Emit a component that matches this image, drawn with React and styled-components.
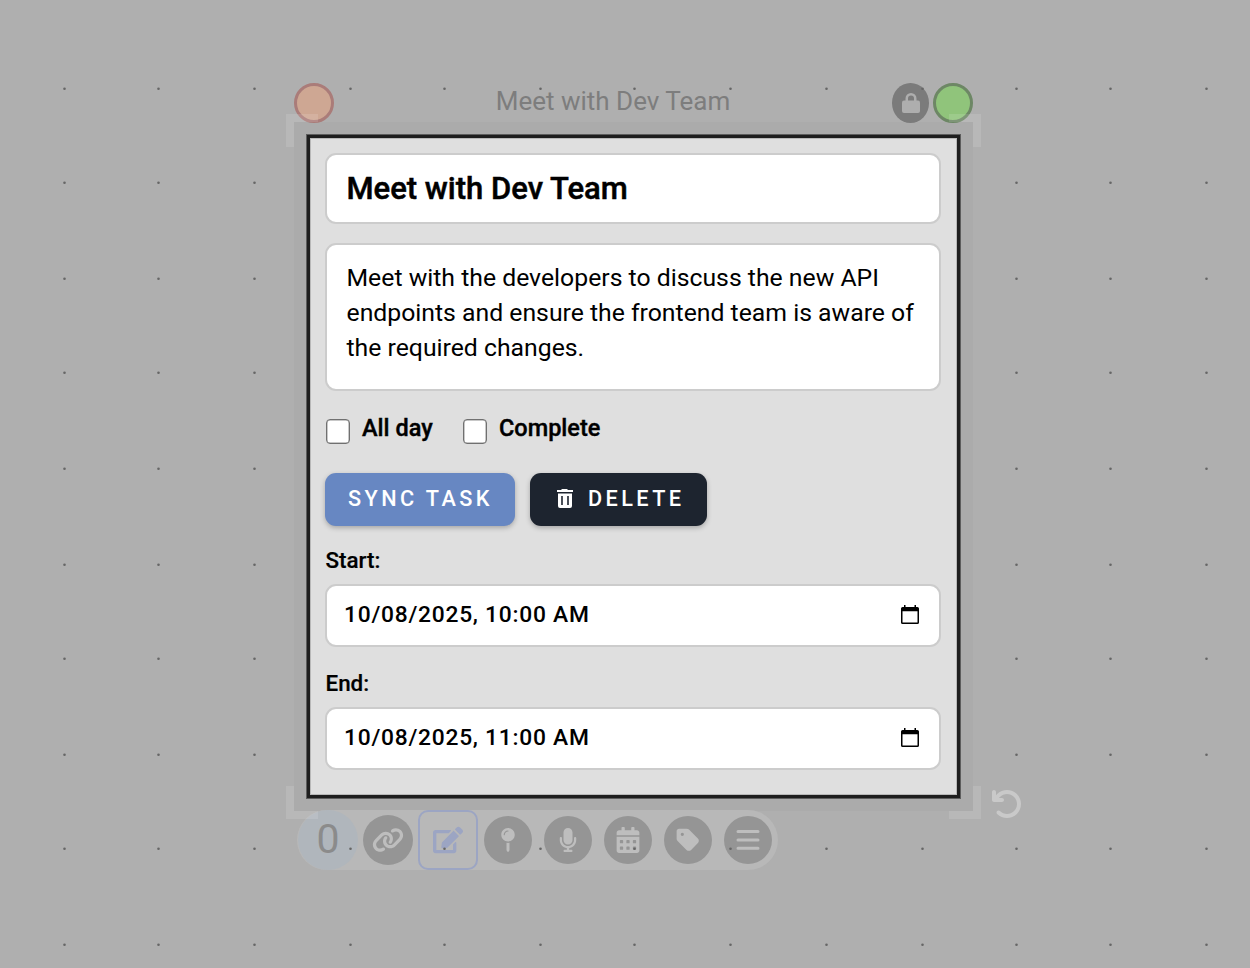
import React from "react";
import styled, { createGlobalStyle } from "styled-components";
import { FaLink, FaArrowRotateLeft, FaMicrophone, FaTag } from "react-icons/fa6";
import { FaEdit, FaMapPin, FaCalendarAlt } from "react-icons/fa";

const GlobalStyle = createGlobalStyle`
  *, *::before, *::after { box-sizing: border-box; }
  body { margin: 0; font-family: Roboto, "Liberation Sans", sans-serif; color: #000; }
`;

const Canvas = styled.main`
  position: relative;
  width: 1250px;
  height: 968px;
  padding: 82px 0 0 286px;
  overflow: hidden;
  background: #afafaf;
`;

const DotGrid = styled.svg`
  position: absolute;
  inset: 0;
  z-index: 2;
  pointer-events: none;
`;

const TaskNode = styled.section`
  position: relative;
  width: 695px;
  padding: 0 8px;
`;

const Halo = styled.div`
  padding: 13px;
  width: 679px;
  background: #ababab;
`;

const Header = styled.header`
  display: flex;
  align-items: center;
  height: 40px;
`;

const Dot = styled.span`
  width: 40px;
  height: 40px;
  margin-top: 1px;
  border-radius: 50%;
  border: 3px solid ${(p) => p.$ring};
  background: ${(p) => p.$fill};
`;

const HeaderTitle = styled.h2`
  flex: 1;
  margin: 0;
  padding: 0 0 3px 0;
  text-align: center;
  font-size: 26px;
  font-weight: 400;
  color: #7d7d7d;
`;

const LockBadge = styled.span`
  display: flex;
  align-items: center;
  justify-content: center;
  width: 37px;
  height: 40px;
  margin: 1px 4px 0 0;
  border-radius: 50%;
  background: #7b7b7b;
`;

const Corner = styled.span`
  position: absolute;
  z-index: 1;
  width: 32px;
  height: 33px;
  border: 0 solid rgba(255, 255, 255, 0.12);
  ${(p) => p.$v}: ${(p) => (p.$v === "top" ? "32px" : "51px")};
  ${(p) => p.$h}: 0;
  border-${(p) => p.$v}-width: 8px;
  border-${(p) => p.$h}-width: 8px;
`;

const Rotate = styled.span`
  position: absolute;
  left: 705px;
  top: 706px;
  display: flex;
  color: #c9c9c9;
`;

const Card = styled.div`
  position: relative;
  z-index: 3;
  display: flex;
  flex-direction: column;
  width: 653px;
  height: 663px;
  padding: 15px 16px;
  border: 3px solid #1e1e1e;
  box-shadow: 0 0 0 1px rgba(30, 30, 30, 0.55), inset 0 0 0 1px rgba(30, 30, 30, 0.2);
  background: #dfdfdf;
`;

const Field = styled.div`
  width: 616px;
  margin-left: -1px;
  border: 2px solid #cccccc;
  border-radius: 11px;
  background: #fff;
`;

const TitleField = styled(Field)`
  height: 71px;
  padding: 0 19.500px;
  font-size: 31px;
  line-height: 68px;
  font-weight: 500;
  -webkit-text-stroke: 0.5px #000;
  white-space: nowrap;
`;

const TextField = styled(Field)`
  height: 148px;
  margin-top: 19px;
  padding: 15px 19.5px;
  font-size: 24.770px;
  line-height: 35px;
  white-space: nowrap;
`;

const Checks = styled.div`
  display: flex;
  height: 25px;
  margin-top: 28px;
`;

const Check = styled.label`
  display: flex;
  width: 137px;
  gap: 12px;
  font-size: 23.5px;
  line-height: 18px;
  font-weight: 500;
  -webkit-text-stroke: 0.4px #000;
  white-space: nowrap;
`;

const Box = styled.span`
  flex: none;
  width: 24px;
  height: 25px;
  border: 1.5px solid #707070;
  box-shadow: inset 0 0 0 0.5px #909090;
  border-radius: 4px;
  background: #fff;
`;

const Buttons = styled.div`
  display: flex;
  gap: 15px;
  margin: 29px 0 0 -1px;
`;

const Button = styled.button`
  display: flex;
  align-items: center;
  justify-content: flex-start;
  gap: 15px;
  width: ${(p) => p.$w}px;
  height: 53px;
  padding: 0 0 2px ${(p) => p.$pad}px;
  border: 0;
  border-radius: 11px;
  background: ${(p) => p.$bg};
  box-shadow: 0 2px 5px rgba(0, 0, 0, 0.25);
  color: #fff;
  font: 500 21.700px/26px Roboto, "Liberation Sans", sans-serif;
  letter-spacing: 3.4px;
  white-space: nowrap;
`;

const Label = styled.span`
  margin: ${(p) => p.$top}px 0 0 -0.500px;
  font-size: 22.400px;
  line-height: 28px;
  font-weight: 500;
  -webkit-text-stroke: 0.2px #000;
`;

const DateField = styled(Field)`
  display: flex;
  align-items: center;
  justify-content: space-between;
  height: 63px;
  margin-top: 10px;
  padding: 0 20px 3px 17px;
  font-size: 22.800px;
  font-weight: 500;
  letter-spacing: 0.740px;
  white-space: nowrap;

  svg { margin-top: 2px; }
`;

const Toolbar = styled.nav`
  display: flex;
  align-items: center;
  width: 481px;
  height: 60px;
  margin: -1px 0 0 3px;
  padding-left: 1px;
  border-radius: 30px;
  background: #b8b8b8;
`;

const Count = styled.span`
  width: 60px;
  height: 60px;
  border-radius: 50%;
  background: #b0b6bc;
  color: #8b8b8b;
  font-size: 41px;
  line-height: 58px;
  text-align: center;
`;

const Slot = styled.span`
  display: flex;
  align-items: center;
  justify-content: center;
  width: 60px;
  height: 60px;
  border: ${(p) => (p.$active ? "2px solid #9ca5c3" : "0")};
  border-radius: 10px;
  color: #9ca5c3;
`;

const Round = styled.span`
  display: flex;
  align-items: center;
  justify-content: center;
  width: ${(p) => p.$d || 48}px;
  height: ${(p) => p.$d || 48}px;
  border-radius: 50%;
  background: #959595;
  color: #bebebe;
`;

const dotX = [64.5, 158.5, 254.5, 350.5, 444.5, 540.5, 634.5, 730.5, 826.5, 922.5, 1016.5, 1110.5, 1206.5];
const dotY = [88.7, 182.7, 278.7, 372.7, 468.7, 564.7, 658.7, 754.7, 848.7, 944.7];

const LockIcon = () => (
  <svg width="18" height="20" viewBox="0 0 18 20">
    <path d="M3.500 9V5.500a5.500 5.500 0 0 1 11 0V9z" fill="#aeaeae" />
    <rect y="7.500" width="18" height="12.500" rx="2" fill="#aeaeae" />
    <path d="M6 7.500V5.600a3 3 0 0 1 6 0v1.900z" fill="#7b7b7b" />
  </svg>
);

const BinIcon = () => (
  <svg width="16" height="19" viewBox="0 0 16 19" fill="#fff">
    <path d="M5 0h5l1 1h5v2H0V1h4z" />
    <path fillRule="evenodd" d="M1 4.500h14V17q0 2-2 2H3q-2 0-2-2zM4.200 7v9h1.600V7zM10.200 7v9h1.600V7z" />
  </svg>
);

const PickerIcon = () => (
  <svg width="18" height="20" viewBox="0 0 18 20">
    <path d="M3 0h1.500v2h9V0H15v2h1.400Q18 2 18 3.600v13.800Q18 19 16.400 19H1.600Q0 19 0 17.400V3.600Q0 2 1.600 2H3zM1.500 6.300v11.200h15V6.300z" fillRule="evenodd" />
  </svg>
);

const MenuIcon = () => (
  <svg width="24" height="22" viewBox="0 0 24 22" stroke="currentColor" strokeWidth="3" strokeLinecap="round">
    <path d="M2 2.500h20M2 11h20M2 19.200h20" />
  </svg>
);

export default function App() {
  return (
    <>
      <GlobalStyle />
      <Canvas>
        <TaskNode>
          <Header>
            <Dot $fill="#cea793" $ring="#aa7c79" />
            <HeaderTitle>Meet with Dev Team</HeaderTitle>
            <LockBadge><LockIcon /></LockBadge>
            <Dot $fill="#90c47b" $ring="#6d8765" />
          </Header>
          <Halo>
            <Card>
              <TitleField>Meet with Dev Team</TitleField>
              <TextField>
                Meet with the developers to discuss the new API<br />
                endpoints and ensure the frontend team is aware of<br />
                the required changes.
              </TextField>
              <Checks>
                <Check><Box />All day</Check>
                <Check><Box />Complete</Check>
              </Checks>
              <Buttons>
                <Button $w={190} $pad={23} $bg="#6787c2">SYNC TASK</Button>
                <Button $w={177} $pad={27} $bg="#1d242f"><BinIcon />DELETE</Button>
              </Buttons>
              <Label $top={20}>Start:</Label>
              <DateField>10/08/2025, 10:00 AM<PickerIcon /></DateField>
              <Label $top={22}>End:</Label>
              <DateField>10/08/2025, 11:00 AM<PickerIcon /></DateField>
            </Card>
          </Halo>
          <Toolbar>
            <Count>0</Count>
            <Slot><Round $d={50}><FaLink size={32} /></Round></Slot>
            <Slot $active><FaEdit size={30} /></Slot>
            <Slot><Round><FaMapPin size={24} /></Round></Slot>
            <Slot><Round><FaMicrophone size={24} /></Round></Slot>
            <Slot><Round><FaCalendarAlt size={26} /></Round></Slot>
            <Slot><Round><FaTag size={26} /></Round></Slot>
            <Slot><Round><MenuIcon /></Round></Slot>
          </Toolbar>
          <Corner $v="top" $h="left" />
          <Corner $v="top" $h="right" />
          <Corner $v="bottom" $h="left" />
          <Corner $v="bottom" $h="right" />
          <Rotate><FaArrowRotateLeft size={32} /></Rotate>
        </TaskNode>
        <DotGrid width="1250" height="968">
          {dotY.map((y) => dotX.map((x) => <circle key={`${x}-${y}`} cx={x} cy={y} r="1.3" fill="#666" />))}
        </DotGrid>
      </Canvas>
    </>
  );
}
